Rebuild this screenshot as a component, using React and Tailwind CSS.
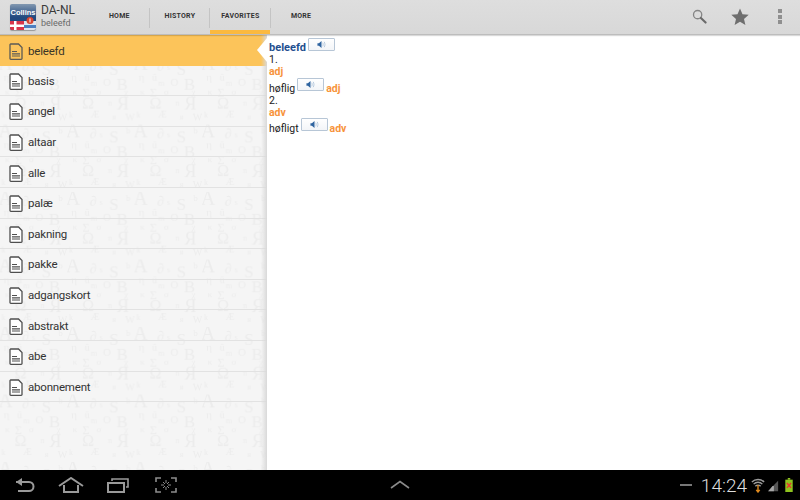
import React from "react";

const words = ["beleefd","basis","angel","altaar","alle","palæ","pakning","pakke","adgangskort","abstrakt","abe","abonnement"];
const tabs = ["HOME","HISTORY","FAVORITES","MORE"];

const serif = { fontFamily: "'Liberation Serif', serif" };

function Pattern() {
  const L = (x, y, s, c) => <text x={x} y={y} fontSize={s} textAnchor="middle" style={serif} fill="#ececec">{c}</text>;
  return (
    <svg className="absolute inset-0 w-full h-full" aria-hidden="true">
      <defs>
        <pattern id="tile" x="-0.5" y="22" width="67.5" height="67.5" patternUnits="userSpaceOnUse">
          {L(6, 13, 20, "A")}{L(26, 14, 14, "∂")}{L(61, 9, 9, "b")}{L(34, 13, 8, "s")}{L(47, 18, 17, "S")}
          {L(7, 24, 11, "η")}{L(20, 24, 10, "ū")}{L(27, 29, 8, "m")}{L(40, 29, 11, "O")}{L(55, 33, 17, "B")}
          {L(8, 38, 9, "κ")}{L(19, 40, 12, "Σ")}{L(32, 38, 9, "σ")}{L(59, 38, 9, "χ")}
          {L(21, 52, 16, "Ω")}{L(43, 49, 8, "n")}{L(56, 53, 18, "Я")}{L(63, 64, 10, "W")}
          {L(28, 61, 10, "Æ")}{L(47, 63, 8, "я")}{L(4, 61, 8, "k")}
        </pattern>
      </defs>
      <rect width="100%" height="100%" fill="url(#tile)" />
    </svg>
  );
}

function DocIcon({ active }) {
  const c = active ? "#5b5a55" : "#4f4f4f";
  return (
    <svg width="14" height="17" viewBox="0 0 14 17" className="shrink-0">
      <path d="M1.5 1h8l3.5 3.5V15.5a.8.8 0 0 1-.8.8H1.8a.8.8 0 0 1-.8-.8V1.8A.8.8 0 0 1 1.5 1z" fill={active ? "#fbc45c" : "#fff"} stroke={c} strokeWidth="1.3" />
      <path d="M3 8.5h5M3 10.8h8M3 13h8" stroke={c} strokeWidth="1.2" fill="none" />
    </svg>
  );
}

function Sound() {
  return (
    <span className="w-[27px] h-[13px] shrink-0 inline-flex items-center justify-center border border-[#b7c6d6] rounded-[1px] bg-gradient-to-b from-white to-[#f3f5f8]">
      <svg width="9" height="9" viewBox="0 0 10 9">
        <path d="M0.5 3h1.6L5 .6v7.8L2.1 6H.5z" fill="#2f64a0" />
        <path d="M6.3 2.5c.7 1.2.7 2.8 0 4M8 1.5c1.1 1.9 1.1 4.1 0 6" stroke="#a9c0d8" strokeWidth=".9" fill="none" />
      </svg>
    </span>
  );
}

function Logo() {
  return (
    <div className="relative w-[26px] h-[26px] shrink-0 rounded-[2px] overflow-hidden bg-gradient-to-b from-[#8298b0] via-[#234a80] to-[#1e4a80] shadow-[0_1px_1px_rgba(0,0,0,0.3)]">
      <div className="flex justify-center pt-[5px]">
        <span className="text-[7.5px] leading-[8px] font-bold text-white" style={{ fontFamily: "'Liberation Sans', sans-serif" }}>Collins</span>
      </div>
      <svg width="26" height="13" viewBox="0 0 26 13" className="absolute left-0 bottom-0">
        <rect y="4" width="14" height="9" fill="#d8344a" />
        <path d="M4 4h2.5v9H4zM0 7.5h14V10H0z" fill="#fff" />
        <rect x="14" y="4" width="12" height="9" fill="#dfe5ee" />
        <rect x="14" y="8" width="12" height="3" fill="#4c7fc0" />
        <circle cx="20" cy="3.5" r="3.5" fill="#d8442f" />
        <path d="M20 1.5v4" stroke="#fff" strokeWidth="1" />
      </svg>
    </div>
  );
}

function TopBar() {
  return (
    <header className="h-[35px] shrink-0 flex items-stretch bg-gradient-to-b from-[#dedede] to-[#d8d8d8] border-b border-[#bdbdbd] shadow-[0_1px_1px_rgba(0,0,0,0.15)] z-20" style={{ fontFamily: "Roboto, sans-serif" }}>
      <div className="w-[89px] shrink-0 flex items-center pl-[10px] gap-[5px] pb-[1px]">
        <Logo />
        <div className="flex flex-col -mt-[2px]">
          <span className="text-[12px] leading-[14px] text-[#3a3a3a]">DA-NL</span>
          <span className="text-[9px] leading-[12px] text-[#6a6a6a]">beleefd</span>
        </div>
      </div>
      {tabs.map((t, i) => (
        <div key={t} className="relative w-[60.6px] flex items-center justify-center pb-[2px]">
          <span className="text-[7px] font-bold tracking-[0.25px] text-[#333]">{t}</span>
          {i < 3 && <div className="absolute right-0 top-[8px] h-[20px] w-px bg-[#c4c4c4]" />}
          {t === "FAVORITES" && <div className="absolute left-0 right-[1px] bottom-0 h-[4px] bg-[#fbb93f]" />}
        </div>
      ))}
      <div className="flex-1" />
      <div className="flex items-center pr-[18px] pb-[1px]">
        <svg width="15" height="15" viewBox="0 0 16 16">
          <circle cx="6" cy="6" r="4.4" fill="none" stroke="#858585" strokeWidth="1.4" />
          <path d="M9.5 9.5L14.5 14.5" stroke="#6a6a6a" strokeWidth="2.2" strokeLinecap="round" />
        </svg>
        <svg width="18" height="17" viewBox="0 0 18 17" className="ml-[24px]">
          <path d="M9 0.5l2.5 5.7 6.2.6-4.7 4.1 1.4 6.1L9 13.8l-5.4 3.2L5 10.9.3 6.8l6.2-.6z" fill="#6e6e6e" />
        </svg>
        <div className="flex flex-col gap-[1.5px] ml-[29px]">
          <div className="w-[4px] h-[4px] bg-[#8f8f8f]" />
          <div className="w-[4px] h-[4px] bg-[#8f8f8f]" />
          <div className="w-[4px] h-[4px] bg-[#8f8f8f]" />
        </div>
      </div>
    </header>
  );
}

function Sidebar() {
  return (
    <aside className="relative w-[267px] shrink-0 bg-[#f5f5f5] overflow-hidden" style={{ fontFamily: "Roboto, sans-serif" }}>
      <Pattern />
      <ul className="relative">
        {words.map((w, i) => (
          <li key={w} className={`h-[30.6px] flex items-center gap-[5px] pl-[9px] pt-[2px] text-[11.5px] tracking-[-0.2px] ${i === 0 ? "bg-[#fcc45a] text-[#3a3527]" : "text-[#333] border-b border-[#e2e2e2]"}`}>
            <DocIcon active={i === 0} />
            <span>{w}</span>
          </li>
        ))}
      </ul>
      <div className="absolute inset-y-0 right-0 w-[6px] bg-gradient-to-r from-transparent to-[#d9d9d9]" />
      <svg width="10" height="24" viewBox="0 0 10 24" className="absolute right-0 top-[3px]">
        <path d="M10 0v24L0 12z" fill="#fff" />
      </svg>
    </aside>
  );
}

function Content() {
  const orange = "font-bold text-[#f7933b] text-[10.5px]";
  return (
    <main className="flex-1 bg-white pl-[2px] pt-[3px] text-[10.5px] leading-[12px] text-[#222]" style={{ fontFamily: "Roboto, sans-serif" }}>
      <div className="flex items-start gap-[2.5px] h-[14px]">
        <span className="text-[11px] font-bold text-[#1f4f8f] mt-[4px]">beleefd</span>
        <Sound />
      </div>
      <div className="mt-[2px]">1.</div>
      <div className={orange}>adj</div>
      <div className="flex items-start gap-[2px] h-[16px]">
        <span className="mt-[5px]">høflig</span>
        <Sound />
        <span className={`${orange} mt-[5px]`}>adj</span>
      </div>
      <div className="mt-[1px]">2.</div>
      <div className={orange}>adv</div>
      <div className="flex items-start gap-[2px] h-[16px] -mt-[1px]">
        <span className="mt-[5px]">høfligt</span>
        <Sound />
        <span className={`${orange} mt-[5px]`}>adv</span>
      </div>
    </main>
  );
}

function NavBar() {
  const s = { stroke: "#9a9a9a", strokeWidth: 2, fill: "none" };
  return (
    <footer className="h-[30px] shrink-0 bg-black flex items-center" style={{ fontFamily: "Roboto, sans-serif" }}>
      <div className="flex items-center pl-[15px] gap-[23px] w-[190px] shrink-0">
        <svg width="20" height="14" viewBox="0 0 20 14"><path d="M1 4h13a4.5 4.5 0 0 1 0 9H3" {...s} /><path d="M7 0L1 4l6 4z" fill="#9a9a9a" /></svg>
        <svg width="26" height="16" viewBox="0 0 26 16"><path d="M1 9L13 1l12 8" {...s} /><path d="M6 8v7h14V8" {...s} /></svg>
        <svg width="22" height="15" viewBox="0 0 22 15"><path d="M1 5h16v9H1z" {...s} /><path d="M5 3V1h16v8h-2" stroke="#9a9a9a" strokeWidth="1.6" fill="none" /></svg>
        <svg width="22" height="16" viewBox="0 0 22 16" className="ml-[3px]">
          <path d="M1 5V1h5M16 1h5v4M21 11v4h-5M6 15H1v-4" stroke="#8c8c8c" strokeWidth="1.6" fill="none" />
          <path d="M11 3v3M11 10v3M6 8h3M13 8h3M8 5l2 2M14 5l-2 2M8 11l2-2M14 11l-2-2" stroke="#8c8c8c" strokeWidth="1" />
        </svg>
      </div>
      <div className="w-[420px] shrink-0 flex justify-center pb-[1px]">
        <svg width="20" height="9" viewBox="0 0 20 9"><path d="M1 8l9-6.5L19 8" stroke="#8a8a8a" strokeWidth="1.6" fill="none" /></svg>
      </div>
      <div className="flex-1 flex items-center justify-end pr-[7px]">
        <div className="w-[12px] h-[1.5px] bg-[#777] mr-[9px]" />
        <span className="text-[19px] leading-none text-[#dedede] font-light mr-[4px]">14:24</span>
        <svg width="14" height="16" viewBox="0 0 16 18" className="mr-[2px]">
          <path d="M1 5.5a10 10 0 0 1 14 0M3 8a7 7 0 0 1 10 0M5 10.5a4 4 0 0 1 6 0" stroke="#9c9c9c" strokeWidth="1.6" fill="none" />
          <path d="M8 9v8M6 14.5l2 2.5 2-2.5" stroke="#e08a1e" strokeWidth="1.6" fill="none" />
        </svg>
        <svg width="12" height="12" viewBox="0 0 14 14" className="mr-[6px] mt-[2px]">
          <path d="M13 1v12H1z" fill="#555" /><path d="M8 7v6H1.5l5-6z" fill="#a8a8a8" />
        </svg>
        <svg width="8" height="14" viewBox="0 0 9 17">
          <rect x="3" y="0" width="3" height="2" fill="#8fc31f" /><rect y="2" width="9" height="15" fill="#8fc31f" />
          <path d="M2 6l5 6M7 6l-5 6" stroke="#e53a2f" strokeWidth="1.8" />
        </svg>
      </div>
    </footer>
  );
}

export default function App() {
  return (
    <div className="w-[800px] h-[500px] flex flex-col overflow-hidden bg-white">
      <TopBar />
      <div className="flex-1 flex min-h-0">
        <Sidebar />
        <Content />
      </div>
      <NavBar />
    </div>
  );
}
